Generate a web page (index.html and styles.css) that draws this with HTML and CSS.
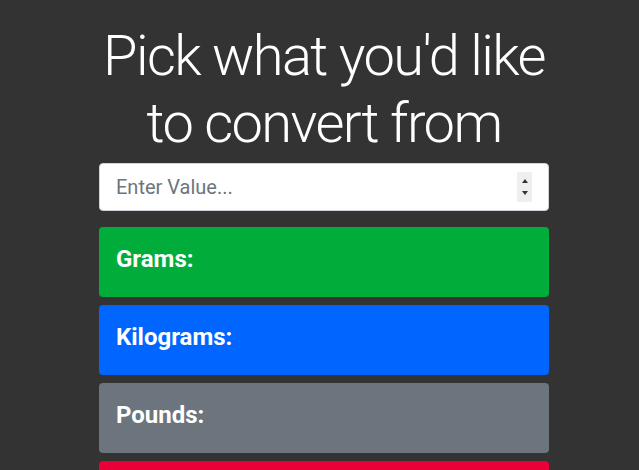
FILE: index.html
```html
<!DOCTYPE html>
<html lang="en">
<head>
<meta charset="utf-8">
<title>Converter</title>
<link rel="stylesheet" href="styles.css">
</head>
<body>
<main class="container">
  <h1 class="title">Pick what you'd like to convert from</h1>
  <div class="field">
    <input class="field-input" type="text" placeholder="Enter Value...">
    <span class="spinner" aria-hidden="true">
      <span class="arrow up"></span>
      <span class="arrow down"></span>
    </span>
  </div>
  <div class="unit unit-green">Grams:</div>
  <div class="unit unit-blue">Kilograms:</div>
  <div class="unit unit-gray">Pounds:</div>
  <div class="unit unit-red"></div>
</main>
</body>
</html>
```
FILE: styles.css
```css
html, body {
  margin: 0;
  padding: 0;
  background: #333333;
  height: 100%;
  overflow: hidden;
}
body {
  font-family: Roboto, "Liberation Sans", Arial, sans-serif;
  color: #fff;
}
.container {
  width: 450px;
  margin: 0 auto;
  padding: 23px 0 0 9px;
  display: flex;
  flex-direction: column;
}
.title {
  margin: 0 -20px 6px;
  font-weight: 300;
  font-size: 56px;
  line-height: 67px;
  letter-spacing: -1.6px;
  text-align: center;
  color: #fff;
}
.field {
  display: flex;
  align-items: center;
  height: 48px;
  box-sizing: border-box;
  background: #fff;
  border: 1px solid #ced4da;
  border-radius: 4px;
  padding: 0 16px;
  margin-bottom: 16px;
}
.field-input {
  flex: 1;
  min-width: 0;
  border: 0;
  outline: 0;
  padding: 0;
  font-family: inherit;
  font-size: 20px;
  color: #495057;
  background: transparent;
}
.field-input::placeholder {
  color: #6c757d;
  opacity: 1;
}
.spinner {
  width: 15px;
  height: 30px;
  background: #efefef;
  display: flex;
  flex-direction: column;
  align-items: center;
  justify-content: center;
  gap: 8px;
}
.arrow {
  width: 0;
  height: 0;
  border-left: 3.5px solid transparent;
  border-right: 3.5px solid transparent;
}
.arrow.up { border-bottom: 4px solid #333; }
.arrow.down { border-top: 4px solid #333; }
.unit {
  flex: none;
  height: 70px;
  box-sizing: border-box;
  border-radius: 4px;
  margin-bottom: 8px;
  padding: 0 17px 6px;
  display: flex;
  align-items: center;
  font-size: 24px;
  font-weight: 700;
  color: #fff;
}
.unit-green { background: #00ad3b; }
.unit-blue { background: #0066ff; }
.unit-gray { background: #6c757d; }
.unit-red { background: #ea0037; }
```
